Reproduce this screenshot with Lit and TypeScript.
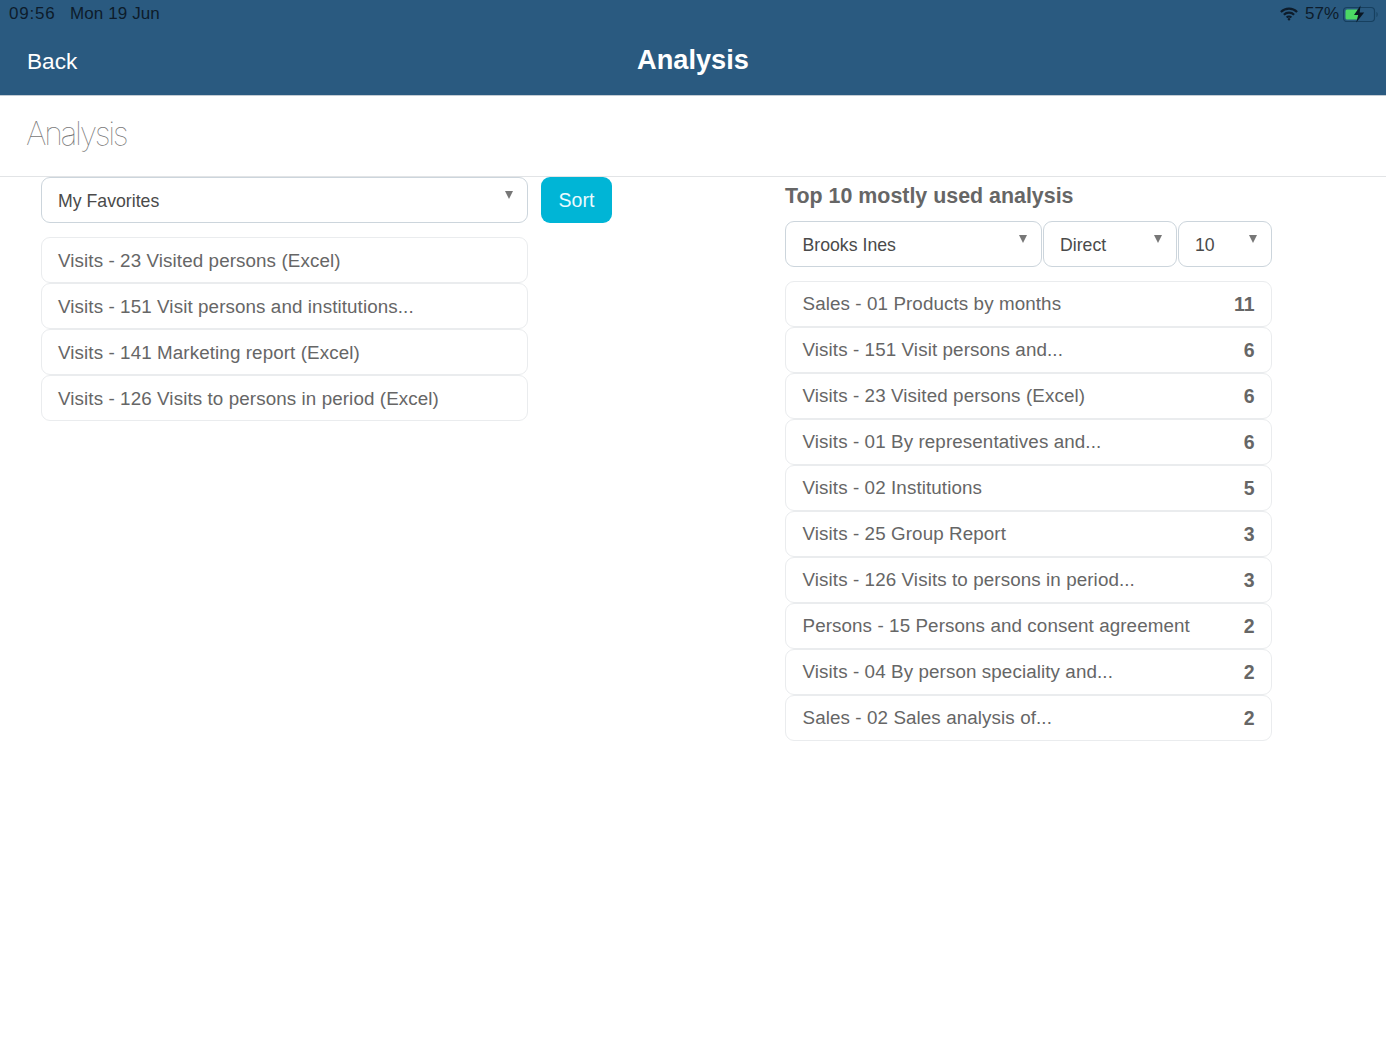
import { LitElement, css, html } from "lit";
import { customElement } from "lit/decorators.js";

const favorites = [
  "Visits - 23 Visited persons (Excel)",
  "Visits - 151 Visit persons and institutions...",
  "Visits - 141 Marketing report (Excel)",
  "Visits - 126 Visits to persons in period (Excel)",
];

const topTen: [string, number][] = [
  ["Sales - 01 Products by months", 11],
  ["Visits - 151 Visit persons and...", 6],
  ["Visits - 23 Visited persons (Excel)", 6],
  ["Visits - 01 By representatives and...", 6],
  ["Visits - 02 Institutions", 5],
  ["Visits - 25 Group Report", 3],
  ["Visits - 126 Visits to persons in period...", 3],
  ["Persons - 15 Persons and consent agreement", 2],
  ["Visits - 04 By person speciality and...", 2],
  ["Sales - 02 Sales analysis of...", 2],
];

@customElement("app-root")
export class AppRoot extends LitElement {
  static styles = css`
    :host {
      display: block;
      width: 1386px;
      height: 1040px;
      background: #fff;
      font-family: "Liberation Sans", Arial, sans-serif;
      color: #555;
      overflow: hidden;
    }
    .header {
      height: 95px;
      background: #2a5a80;
      border-bottom: 1px solid #c3ccd4;
    }
    .status {
      height: 27px;
      display: flex;
      align-items: center;
      padding: 0 7px 0 9px;
      font-size: 17px;
      color: #0d1c2b;
    }
    .status .time {
      letter-spacing: 0.8px;
    }
    .status .date {
      margin-left: 14.5px;
      letter-spacing: 0.1px;
    }
    .status .right {
      margin-left: auto;
      display: flex;
      align-items: center;
      gap: 4px;
    }
    .status .wifi {
      margin-right: 3px;
    }
    .nav {
      height: 68px;
      display: flex;
      align-items: center;
      justify-content: center;
      position: relative;
      color: #fff;
    }
    .back {
      position: absolute;
      left: 27px;
      top: 21px;
      font-size: 22.6px;
      line-height: 28px;
    }
    .nav-title {
      font-size: 27.2px;
      font-weight: 700;
      margin-top: -2px;
    }
    .page-title {
      height: 81px;
      box-sizing: border-box;
      border-bottom: 1px solid #e2e4e6;
      padding: 18px 0 0 26px;
      font-family: "Inter", "Liberation Sans", sans-serif;
      font-weight: 100;
      font-size: 32px;
      line-height: 40px;
      letter-spacing: -2.3px;
      color: #777;
    }
    .content {
      display: flex;
      padding-left: 41px;
    }
    .left {
      width: 744px;
      flex: none;
    }
    .left-top {
      display: flex;
      gap: 13.5px;
      margin-bottom: 14px;
    }
    .right-col {
      width: 487px;
      flex: none;
    }
    h2 {
      margin: 5px 0 11px;
      font-size: 21.4px;
      line-height: 28px;
      font-weight: 700;
      color: #666;
    }
    .filters {
      display: flex;
      gap: 1px;
      margin-bottom: 14px;
    }
    .select {
      height: 46px;
      flex: none;
      box-sizing: border-box;
      border: 1.5px solid #ccd5dc;
      border-radius: 9px;
      background: #fff;
      padding: 2px 0 0 16px;
      display: flex;
      align-items: center;
      font-size: 17.7px;
      color: #4a4a4a;
      position: relative;
    }
    .select::after {
      content: "";
      position: absolute;
      right: 14px;
      top: 13px;
      border-left: 4.5px solid transparent;
      border-right: 4.5px solid transparent;
      border-top: 8px solid #777;
    }
    .w-main {
      width: 486.5px;
    }
    .w-person {
      width: 257px;
      padding-left: 16.5px;
    }
    .w-type {
      width: 134px;
    }
    .w-count {
      width: 94px;
    }
    .sort {
      width: 71px;
      height: 46px;
      box-sizing: border-box;
      border: none;
      border-radius: 9px;
      background: #00b5d6;
      color: #eafaff;
      font: 19.5px "Liberation Sans", Arial, sans-serif;
      padding: 0;
    }
    .list {
      display: flex;
      flex-direction: column;
    }
    .item {
      height: 46px;
      box-sizing: border-box;
      border: 1.5px solid #eaecee;
      border-radius: 9px;
      padding: 0 16.5px;
      display: flex;
      align-items: center;
      justify-content: space-between;
      font-size: 18.8px;
      letter-spacing: 0.1px;
      color: #666;
      white-space: nowrap;
    }
    .left .item {
      width: 486.5px;
      padding: 1px 16px 0;
    }
    .count {
      font-weight: 700;
      font-size: 19.5px;
      letter-spacing: 0;
    }
  `;

  renderStatusIcons() {
    return html`
      <svg class="wifi" width="18" height="14" viewBox="0 0 20 15" fill="none" stroke="#0d1c2b" stroke-width="2.4">
        <path d="M1 5.200a12.800 12.800 0 0 1 18 0" />
        <path d="M4.300 8.400a8 8 0 0 1 11.400 0" />
        <path d="M7.400 11.300a3.700 3.700 0 0 1 5.200 0" />
        <circle cx="10" cy="13.300" r="1.300" fill="#0d1c2b" stroke="none" />
      </svg>
      <span>57%</span>
      <svg width="36" height="18" viewBox="0 0 36 18">
        <rect x="0.500" y="2.500" width="31" height="14" rx="3.500" fill="none" stroke="#17405f" stroke-width="1.200" />
        <rect x="2.500" y="4.500" width="13" height="10" rx="1.500" fill="#4cd964" />
        <path d="M33.500 7c1.500.4 1.500 4.600 0 5z" fill="#17405f" />
        <path d="M17.500 0.500 11 10h4.200l-2 7.500 8-10h-4.500z" fill="#0a1622" />
      </svg>
    `;
  }

  render() {
    return html`
      <div class="header">
        <div class="status">
          <span class="time">09:56</span>
          <span class="date">Mon 19 Jun</span>
          <div class="right">${this.renderStatusIcons()}</div>
        </div>
        <div class="nav">
          <span class="back">Back</span>
          <span class="nav-title">Analysis</span>
        </div>
      </div>
      <div class="page-title">Analysis</div>
      <div class="content">
        <div class="left">
          <div class="left-top">
            <div class="select w-main">My Favorites</div>
            <button class="sort">Sort</button>
          </div>
          <div class="list">
            ${favorites.map((f) => html`<div class="item">${f}</div>`)}
          </div>
        </div>
        <div class="right-col">
          <h2>Top 10 mostly used analysis</h2>
          <div class="filters">
            <div class="select w-person">Brooks Ines</div>
            <div class="select w-type">Direct</div>
            <div class="select w-count">10</div>
          </div>
          <div class="list">
            ${topTen.map(
              ([name, n]) => html`<div class="item"><span>${name}</span><span class="count">${n}</span></div>`,
            )}
          </div>
        </div>
      </div>
    `;
  }
}
